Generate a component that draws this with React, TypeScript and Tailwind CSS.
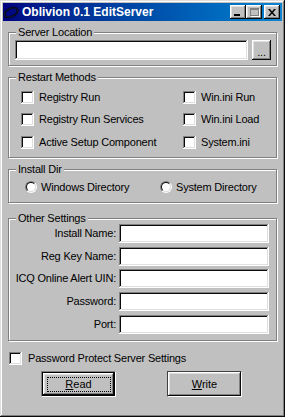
import React from 'react'

const sunken =
  'bg-white shadow-[inset_-1px_-1px_#fff,inset_1px_1px_#808080,inset_-2px_-2px_#dfdfdf,inset_2px_2px_#0a0a0a]'
const raised =
  'bg-[#c0c0c0] shadow-[inset_-1px_-1px_#0a0a0a,inset_1px_1px_#fff,inset_-2px_-2px_#808080,inset_2px_2px_#dfdfdf]'

function Group({ label, className, children }: { label: string; className: string; children?: React.ReactNode }) {
  return (
    <div className={`relative border border-[#808080] shadow-[1px_1px_0_#fff,inset_1px_1px_0_#fff] ${className}`}>
      <span className="absolute -top-[7px] left-[7px] bg-[#c0c0c0] px-[2px] leading-[13px]">{label}</span>
      {children}
    </div>
  )
}

function Check({ label }: { label: string }) {
  return (
    <div className="flex h-[13px] items-center">
      <div className={`h-[13px] w-[13px] shrink-0 ${sunken}`} />
      <span className="ml-[5px] leading-[13px] whitespace-nowrap">{label}</span>
    </div>
  )
}

function Radio({ label }: { label: string }) {
  return (
    <div className="flex h-[12px] items-center">
      <div className="h-[12px] w-[12px] shrink-0 rounded-full border border-[#808080] border-r-white border-b-white">
        <div className="h-full w-full rounded-full border border-[#0a0a0a] border-r-[#dfdfdf] border-b-[#dfdfdf] bg-white" />
      </div>
      <span className="ml-[4px] leading-[13px] whitespace-nowrap">{label}</span>
    </div>
  )
}

const fields = [
  { label: 'Install Name:', mt: 'mt-0' },
  { label: 'Reg Key Name:', mt: 'mt-[4px]' },
  { label: 'ICQ Online Alert UIN:', mt: 'mt-[3px]' },
  { label: 'Password:', mt: 'mt-[4px]' },
  { label: 'Port:', mt: 'mt-[4px]' },
]

export default function App() {
  return (
    <div className="h-[417px] w-[285px] bg-[#c0c0c0] p-[3px] font-['Liberation_Sans',Arial,sans-serif] text-[11px] tracking-[-0.2px] text-black shadow-[inset_-1px_-1px_#0a0a0a,inset_1px_1px_#dfdfdf,inset_-2px_-2px_#808080,inset_2px_2px_#fff]">
      {/* title bar */}
      <div className="flex h-[18px] items-center bg-linear-to-r from-[#000080] to-[#1084d0] pr-[2px]">
        <svg width="16" height="16" viewBox="0 0 16 16" className="shrink-0">
          <ellipse cx="8" cy="8.5" rx="7" ry="4" transform="rotate(-25 8 8.5)" fill="none" stroke="#000" strokeWidth="2" />
          <ellipse cx="8" cy="8.5" rx="7" ry="4" transform="rotate(-25 8 8.5)" fill="none" stroke="#1a2a70" strokeWidth="0.6" />
        </svg>
        <span className="ml-[3px] text-[12px] font-bold leading-[18px] tracking-normal text-white whitespace-nowrap">Oblivion 0.1 EditServer</span>
        <div className="ml-auto flex">
          <div className={`relative h-[14px] w-[16px] ${raised}`}>
            <div className="absolute left-[4px] top-[9px] h-[2px] w-[6px] bg-black" />
          </div>
          <div className={`relative h-[14px] w-[16px] ${raised}`}>
            <div className="absolute left-[4px] top-[3px] h-[8px] w-[9px] border border-t-2 border-[#808080] shadow-[1px_1px_0_#fff]" />
          </div>
          <div className={`ml-[2px] flex h-[14px] w-[16px] items-center justify-center ${raised}`}>
            <svg width="8" height="7" viewBox="0 0 8 7">
              <path d="M0 0h2l2 2.5L6 0h2L5 3.5 8 7H6L4 4.5 2 7H0l3-3.5z" fill="#000" />
            </svg>
          </div>
        </div>
      </div>

      <div className="px-[5px]">
        <Group label="Server Location" className="mt-[11px] h-[34px]">
          <div className="flex pl-[6px] pt-[7px]">
            <div className={`h-[20px] w-[233px] ${sunken}`} />
            <div className={`ml-[4px] flex h-[20px] w-[19px] items-end justify-center pb-[3px] leading-[10px] ${raised}`}>...</div>
          </div>
        </Group>

        <Group label="Restart Methods" className="mt-[11px] h-[81px]">
          <div className="grid grid-cols-[162px_auto] pl-[12px] pt-[13px]">
            <div className="flex flex-col">
              <Check label="Registry Run" />
              <div className="mt-[9px]"><Check label="Registry Run Services" /></div>
              <div className="mt-[10px]"><Check label="Active Setup Component" /></div>
            </div>
            <div className="flex flex-col">
              <Check label="Win.ini Run" />
              <div className="mt-[9px]"><Check label="Win.ini Load" /></div>
              <div className="mt-[10px]"><Check label="System.ini" /></div>
            </div>
          </div>
        </Group>

        <Group label="Install Dir" className="mt-[11px] h-[34px]">
          <div className="grid grid-cols-[135px_auto] pl-[16px] pt-[11px]">
            <Radio label="Windows Directory" />
            <Radio label="System Directory" />
          </div>
        </Group>

        <Group label="Other Settings" className="mt-[15px] h-[123px]">
          <div className="flex flex-col pt-[5px]">
            {fields.map((f) => (
              <div key={f.label} className={`flex items-center ${f.mt}`}>
                <span className="w-[107px] text-right leading-[13px] whitespace-nowrap">{f.label}</span>
                <div className={`ml-[3px] h-[19px] w-[150px] ${sunken}`} />
              </div>
            ))}
          </div>
        </Group>

        <div className="mt-[11px] flex items-center pl-[1px]">
          <div className={`h-[13px] w-[13px] ${sunken}`} />
          <span className="ml-[6px] leading-[13px]">Password Protect Server Settings</span>
        </div>

        <div className="mt-[6px] flex pl-[33px]">
          <div className="h-[26px] w-[75px] border border-[#808080] border-r-white border-b-white">
            <div className="h-full w-full border border-black">
              <div className={`relative flex h-full w-full items-center justify-center ${raised}`}>
                <div className="absolute left-[4px] right-[3px] top-[4px] bottom-[3px] border border-dotted border-black" />
                <span className="leading-[13px] tracking-normal"><span className="underline">R</span>ead</span>
              </div>
            </div>
          </div>
          <div className="ml-[51px] h-[26px] w-[75px] border border-[#404040] border-r-white border-b-white">
            <div className={`flex h-full w-full items-center justify-center ${raised}`}>
              <span className="leading-[13px] tracking-normal"><span className="underline">W</span>rite</span>
            </div>
          </div>
        </div>
      </div>
    </div>
  )
}
